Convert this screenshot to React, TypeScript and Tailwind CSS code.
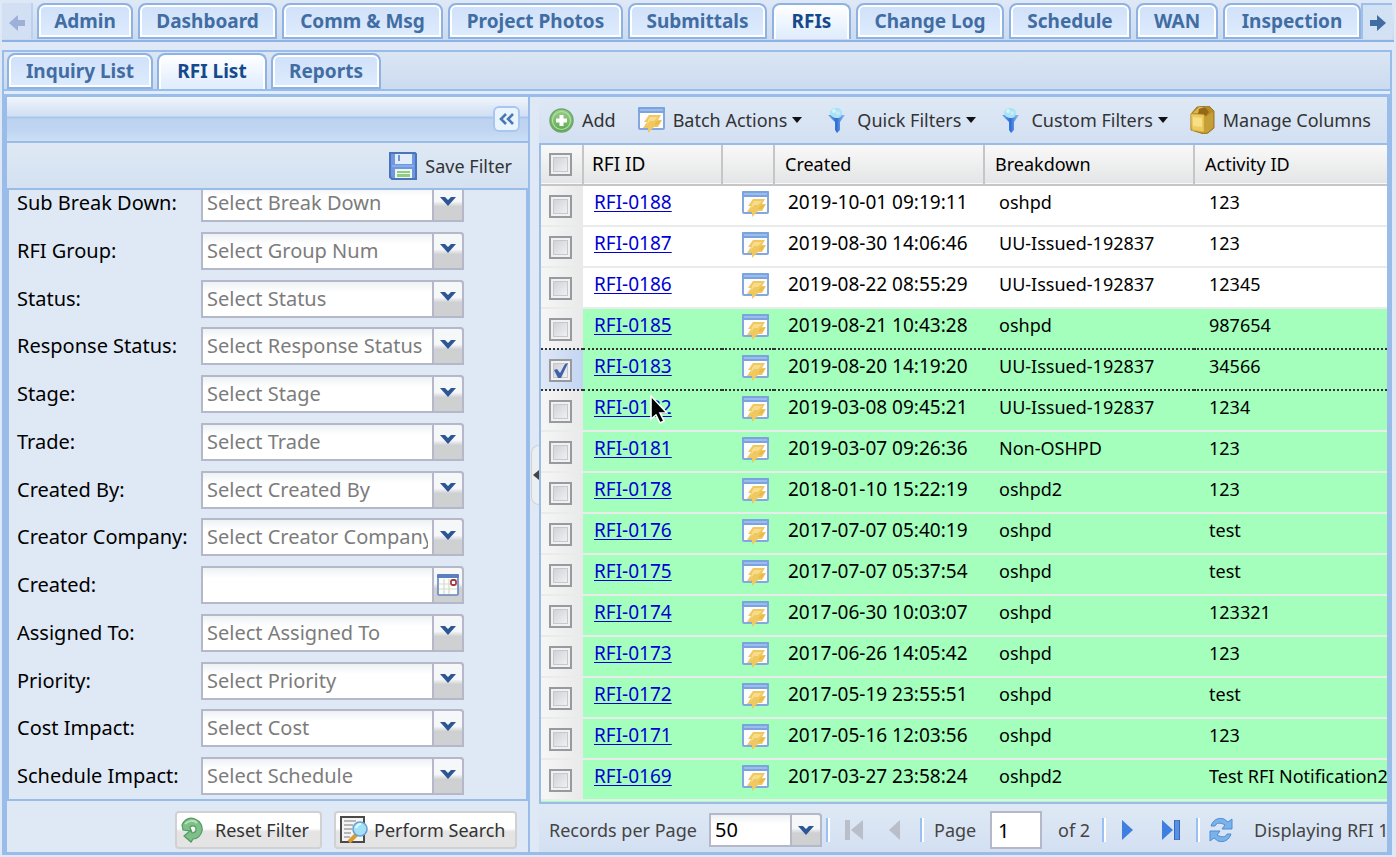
import React from "react";

type IconProps = { className?: string };

function ActionIcon({ className = "" }: IconProps) {
  return (
    <svg className={className} width="27" height="26" viewBox="0 0 27 26" aria-hidden="true">
      <rect x="1" y="1" width="25" height="21" rx="1" fill="#fdfdff" stroke="#84a8de" strokeWidth="2" />
      <rect x="0" y="0" width="27" height="6" rx="1" fill="#7ba4df" />
      <rect x="2" y="2" width="23" height="2" fill="#9bbcec" />
      <path d="M11 8h12l-3 5h4l-4 7h-4l-6 6 0-5H5l4-6H6z" fill="#f0c860" />
      <path d="M12 10h8l-4 4h-4l-3 4 1-5z" fill="#f9dc8a" />
      <path d="M19 14h4l-3 4h-4z" fill="#e9bb4a" />
    </svg>
  );
}

function AddIcon() {
  return (
    <svg width="25" height="25" viewBox="0 0 25 25" aria-hidden="true">
      <defs>
        <linearGradient id="add" x1="0" y1="0" x2="0" y2="1">
          <stop offset="0" stopColor="#9bd08c" />
          <stop offset="1" stopColor="#5aa84f" />
        </linearGradient>
      </defs>
      <circle cx="12.5" cy="12.5" r="11.5" fill="url(#add)" stroke="#6fa86c" strokeWidth="1.5" />
      <circle cx="12.5" cy="12.5" r="9" fill="none" stroke="#b5dfa9" strokeWidth="1.2" />
      <path d="M10.5 7h4v3.500H18v4h-3.500V18h-4v-3.500H7v-4h3.500z" fill="#fff" />
    </svg>
  );
}

function FunnelIcon() {
  return (
    <svg width="25" height="26" viewBox="-4 0 25 26" aria-hidden="true">
      <defs>
        <linearGradient id="funnel" x1="0" y1="0" x2="1" y2="0">
          <stop offset="0" stopColor="#6fabf0" />
          <stop offset="0.5" stopColor="#2f6fd4" />
          <stop offset="1" stopColor="#9cc3f3" />
        </linearGradient>
      </defs>
      <path d="M0 8h17l-5 7v8l-3 3-2-3v-8z" fill="url(#funnel)" />
      <path d="M2 6c0-3 3-5 6-5 4 0 6 2 6 5s-2 5-5 5-7-2-7-5z" fill="#a9e3f5" />
      <circle cx="6" cy="4" r="2" fill="#d2f4fb" />
      <circle cx="10" cy="6" r="2" fill="#c3edf8" />
    </svg>
  );
}

function BoxIcon() {
  return (
    <svg width="25" height="28" viewBox="0 0 25 28" aria-hidden="true">
      <path d="M1 8 7 1l12-1 5 5v17l-6 5-4 1-13-4z" fill="#b98d25" stroke="#9a7a26" strokeWidth="1" />
      <path d="M3 7l6-6 7 0-5 6z" fill="#dcb64c" />
      <path d="M9 3l6-2 4 5-3 4-8-2z" fill="#94691a" />
      <path d="M1 8l13 1v17L2 24z" fill="#edca5c" stroke="#d9b347" strokeWidth="1" />
      <path d="M3 11l9 1v9l-9-1z" fill="#f7df85" />
      <path d="M15 11l8-5v15l-5 5-3 1z" fill="#c59f38" />
    </svg>
  );
}

function SaveIcon() {
  return (
    <svg width="28" height="28" viewBox="0 0 28 28" aria-hidden="true">
      <path d="M1 1h25l1 1v25H3l-2-2z" fill="#6f98e0" stroke="#4b74ba" strokeWidth="2" />
      <rect x="6" y="2" width="17" height="10" fill="#e4edfa" />
      <rect x="9" y="3" width="2" height="6" fill="#6f95d6" />
      <rect x="3" y="13" width="22" height="2" fill="#85aaf0" />
      <rect x="6" y="17" width="17" height="9" fill="#eef6ee" />
      <rect x="8" y="19" width="13" height="2" fill="#8fcc86" />
      <rect x="8" y="22" width="13" height="3" fill="#8fcc86" />
    </svg>
  );
}

function ResetIcon() {
  return (
    <svg width="22" height="26" viewBox="0 0 22 26" aria-hidden="true">
      <path
        d="M1 8C4 2 9 0 14 2c5 2 8 7 7 12-1 5-5 8-9 8l-2 3-7-6 7-6 1 3c3 0 4-2 4-4 0-3-3-4-6-2l1 4-8-1z"
        fill="#7fc08a"
        stroke="#4f9a60"
        strokeWidth="1.2"
      />
      <path d="M4 7c4-4 9-4 12-1" fill="none" stroke="#b9e0bb" strokeWidth="2" />
    </svg>
  );
}

function SearchDocIcon() {
  return (
    <svg width="28" height="27" viewBox="0 0 28 27" aria-hidden="true">
      <rect x="1" y="1" width="23" height="25" fill="#f4f4f4" stroke="#4a4a4a" strokeWidth="2" />
      <path d="M4 5h12M4 9h9M4 13h8M4 17h7M4 21h6" stroke="#a2a2a2" strokeWidth="1.6" />
      <path d="M9 26l8-8" stroke="#d99a2e" strokeWidth="4" />
      <circle cx="20" cy="13" r="7" fill="#a5e1f6" stroke="#6a9fd2" strokeWidth="1.6" />
      <path d="M16 12c1-3 3-4 5-4" fill="none" stroke="#e6fafe" strokeWidth="2" />
    </svg>
  );
}

function CalendarIcon() {
  return (
    <svg width="22" height="22" viewBox="0 0 22 22" aria-hidden="true">
      <rect x="1" y="1" width="20" height="20" rx="1" fill="#fdfdfd" stroke="#6485bd" strokeWidth="1.6" />
      <rect x="0" y="0" width="22" height="4" rx="1" fill="#5a7fc0" />
      <path d="M2 10h18M2 15h18M7 5v15M12 5v15" stroke="#d3dccb" strokeWidth="1.2" />
      <rect x="14" y="6" width="5" height="5" rx="1.5" fill="#fff" stroke="#a33c3c" strokeWidth="1.8" />
    </svg>
  );
}

function RefreshIcon() {
  return (
    <svg width="26" height="26" viewBox="0 0 26 26" aria-hidden="true">
      <path d="M3 9C5 3 10 0 16 2l4 3 4-3v10H14l3-4C12 5 8 6 7 9z" fill="#7ab2ea" stroke="#4f8cd4" strokeWidth="1" />
      <path d="M23 17c-2 6-7 9-13 7l-4-3-4 3V14h10l-3 4c5 3 9 2 10-1z" fill="#7ab2ea" stroke="#4f8cd4" strokeWidth="1" />
    </svg>
  );
}

function Chevron() {
  return (
    <svg width="16" height="9" viewBox="0 0 16 9" aria-hidden="true">
      <path d="M0 0h5l3 3 3-3h5L8 9z" fill="#2d5696" />
    </svg>
  );
}

function Caret() {
  return (
    <svg width="11" height="6" viewBox="0 0 11 6" aria-hidden="true">
      <path d="M1 0h10L6 6z" fill="#111" />
    </svg>
  );
}

function ScrollArrow({ className = "", color }: { className?: string; color: string }) {
  return (
    <svg className={className} width="16" height="16" viewBox="0 0 16 16" aria-hidden="true">
      <path d="M0 5h7V0l9 8-9 8v-5H0z" fill={color} />
    </svg>
  );
}

const mainTabs = [
  { label: "Admin", width: "w-[96px]" },
  { label: "Dashboard", width: "w-[139px]" },
  { label: "Comm & Msg", width: "w-[161px]" },
  { label: "Project Photos", width: "w-[175px]" },
  { label: "Submittals", width: "w-[139px]" },
  { label: "RFIs", width: "w-[79px]", active: true },
  { label: "Change Log", width: "w-[148px]" },
  { label: "Schedule", width: "w-[122px]" },
  { label: "WAN", width: "w-[82px]" },
  { label: "Inspection", width: "w-[138px]" },
];

const subTabs = [
  { label: "Inquiry List", width: "w-[146px]" },
  { label: "RFI List", width: "w-[110px]", active: true },
  { label: "Reports", width: "w-[110px]" },
];

function Tab({ label, width, active }: { label: string; width: string; active?: boolean }) {
  const look = active
    ? "border-b-0 bg-linear-to-b from-white to-[#deecfd] pb-0.5 text-[#15498b] shadow-[inset_2px_2px_0_#fff,inset_-2px_0_0_#fff]"
    : "bg-linear-to-b from-[#cfe0f9] to-[#deecfd] text-[#416da3] shadow-[inset_0_0_0_2px_#fff]";
  return (
    <button
      type="button"
      role="tab"
      aria-selected={!!active}
      className={`h-9 shrink-0 rounded-t-lg border-2 border-[#8db2e3] text-center font-bold leading-6 whitespace-nowrap ${width} ${look}`}
    >
      {label}
    </button>
  );
}

const filters = [
  { id: "sub", label: "Sub Break Down:", hint: "Select Break Down" },
  { id: "group", label: "RFI Group:", hint: "Select Group Num" },
  { id: "status", label: "Status:", hint: "Select Status" },
  { id: "response", label: "Response Status:", hint: "Select Response Status" },
  { id: "stage", label: "Stage:", hint: "Select Stage" },
  { id: "trade", label: "Trade:", hint: "Select Trade" },
  { id: "creator", label: "Created By:", hint: "Select Created By" },
  { id: "company", label: "Creator Company:", hint: "Select Creator Company" },
  { id: "created", label: "Created:", date: true },
  { id: "assigned", label: "Assigned To:", hint: "Select Assigned To" },
  { id: "priority", label: "Priority:", hint: "Select Priority" },
  { id: "cost", label: "Cost Impact:", hint: "Select Cost" },
  { id: "schedule", label: "Schedule Impact:", hint: "Select Schedule" },
];

const triggerLook =
  "flex w-8 items-center justify-center rounded-tr border-2 border-[#b5b8c8] bg-linear-to-b from-[#f6f7f9] from-45% to-[#cfd0d1] to-60%";

function FilterRow({ id, label, hint, date }: { id: string; label: string; hint?: string; date?: boolean }) {
  return (
    <div className="flex h-[38px] shrink-0 items-center text-[20px] first:-mt-1.5">
      <label htmlFor={id} className="w-[192px] pl-2 whitespace-nowrap text-black">
        {label}
      </label>
      {date ? (
        <div className="flex h-full w-[263px]">
          <input
            id={id}
            type="text"
            className="h-full min-w-0 flex-1 border-2 border-r-0 border-[#b5b8c8] bg-linear-to-b from-[#eef1f3] to-white to-30% px-1 outline-none"
          />
          <button type="button" aria-label="Pick date" className={triggerLook}>
            <CalendarIcon />
          </button>
        </div>
      ) : (
        <div className="relative h-full w-[263px]">
          <select
            id={id}
            className="h-full w-full appearance-none rounded-tr border-2 border-[#b5b8c8] bg-linear-to-b from-[#eef1f3] to-white to-30% pr-[34px] pl-1 text-[#7c7c7c] outline-none"
          >
            <option>{hint}</option>
          </select>
          <span className={`pointer-events-none absolute inset-y-0 right-0 pb-1 ${triggerLook}`}>
            <Chevron />
          </span>
        </div>
      )}
    </div>
  );
}

const rows = [
  ["RFI-0188", "2019-10-01 09:19:11", "oshpd", "123"],
  ["RFI-0187", "2019-08-30 14:06:46", "UU-Issued-192837", "123"],
  ["RFI-0186", "2019-08-22 08:55:29", "UU-Issued-192837", "12345"],
  ["RFI-0185", "2019-08-21 10:43:28", "oshpd", "987654"],
  ["RFI-0183", "2019-08-20 14:19:20", "UU-Issued-192837", "34566"],
  ["RFI-0182", "2019-03-08 09:45:21", "UU-Issued-192837", "1234"],
  ["RFI-0181", "2019-03-07 09:26:36", "Non-OSHPD", "123"],
  ["RFI-0178", "2018-01-10 15:22:19", "oshpd2", "123"],
  ["RFI-0176", "2017-07-07 05:40:19", "oshpd", "test"],
  ["RFI-0175", "2017-07-07 05:37:54", "oshpd", "test"],
  ["RFI-0174", "2017-06-30 10:03:07", "oshpd", "123321"],
  ["RFI-0173", "2017-06-26 14:05:42", "oshpd", "123"],
  ["RFI-0172", "2017-05-19 23:55:51", "oshpd", "test"],
  ["RFI-0171", "2017-05-16 12:03:56", "oshpd", "123"],
  ["RFI-0169", "2017-03-27 23:58:24", "oshpd2", "Test RFI Notification2"],
];

function Check({ label, checked }: { label: string; checked?: boolean }) {
  return (
    <span className="relative block size-[23px]">
      <input
        type="checkbox"
        aria-label={label}
        defaultChecked={checked}
        className="peer block size-full appearance-none border-2 border-[#979b9f] bg-linear-to-br from-[#c9ccd3] to-[#f7f7f7] shadow-[inset_0_0_0_2px_#f1f1f1,inset_0_0_0_3px_#c6c8cc]"
      />
      <svg
        className="pointer-events-none absolute inset-0 hidden peer-checked:block"
        width="23"
        height="23"
        viewBox="0 0 23 23"
        aria-hidden="true"
      >
        <path d="M5 11l3-1 3 4 5-9 3-1-7 15h-3z" fill="#3f62ab" />
      </svg>
    </span>
  );
}

function ToolButton({ icon, label, menu }: { icon: React.ReactNode; label: string; menu?: boolean }) {
  return (
    <button type="button" className="flex shrink-0 items-center whitespace-nowrap">
      {icon}
      <span className="pl-2">{label}</span>
      {menu && (
        <span className="pl-1">
          <Caret />
        </span>
      )}
    </button>
  );
}

function Separator() {
  return <span className="h-6 w-1 shrink-0 border-r-2 border-l-2 border-r-white border-l-[#98c0f4]" />;
}

function Grid() {
  return (
    <div className="min-h-0 flex-1 overflow-hidden border-y-2 border-l-2 border-[#99bce8] bg-[#a4ffbc]">
      <table className="w-full table-fixed border-collapse text-left text-[19px] text-black">
        <colgroup>
          <col className="w-[42px]" />
          <col className="w-[139px]" />
          <col className="w-[52px]" />
          <col className="w-[210px]" />
          <col className="w-[210px]" />
          <col />
        </colgroup>
        <thead>
          <tr className="h-10 border-b-2 border-[#c5c5ca] bg-linear-to-b from-[#f9f9f9] to-[#e4e5e6]">
            <th className="border-r-2 border-[#c5c5ca] pl-2">
              <Check label="Select all" />
            </th>
            <th className="border-r-2 border-[#c5c5ca] pb-0.5 pl-2 font-normal">RFI ID</th>
            <th className="border-r-2 border-[#c5c5ca]" aria-label="Actions" />
            <th className="border-r-2 border-[#c5c5ca] pb-0.5 pl-2.5 text-[18px] font-normal">Created</th>
            <th className="border-r-2 border-[#c5c5ca] pb-0.5 pl-2.5 text-[18px] font-normal">Breakdown</th>
            <th className="pb-0.5 pl-2.5 text-[18px] font-normal">Activity ID</th>
          </tr>
        </thead>
        <tbody>
          {rows.map(([id, created, breakdown, activity], i) => {
            const line =
              i === 3 || i === 4 ? "border-b-2 border-dotted border-[#333]" : "border-b-2 border-[#e9eceb]";
            const fill = i < 3 ? "bg-white" : "bg-[#a4ffbc]";
            const checkFill = i === 4 ? "bg-linear-to-r from-[#dfe8f6] to-[#c3d5f2]" : "bg-linear-to-r from-[#f6f6f6] to-[#e9e9ea]";
            return (
              <tr key={id} className={`h-[41px] ${line} ${fill}`}>
                <td className={`pt-0.5 pl-2 ${checkFill}`}>
                  <Check label={`Select ${id}`} checked={i === 4} />
                </td>
                <td className="pb-2 pl-[11px]">
                  <span className="relative block">
                    <a href="#" className="text-[#0000d4] underline underline-offset-2">
                      {id}
                    </a>
                    {id === "RFI-0182" && (
                      <svg
                        className="pointer-events-none absolute top-0 left-14"
                        width="18"
                        height="30"
                        viewBox="0 0 18 30"
                        aria-hidden="true"
                      >
                        <path d="M1 1v23l5-4 4 8 4-2-4-8h7z" fill="#000" stroke="#fff" strokeWidth="1.6" />
                      </svg>
                    )}
                  </span>
                </td>
                <td className="pb-1 pl-5">
                  <ActionIcon />
                </td>
                <td className="pb-2 pl-3.5 whitespace-nowrap">{created}</td>
                <td className="pb-2 pl-[15px] text-[18px] whitespace-nowrap">{breakdown}</td>
                <td className="pb-2 pl-[15px] text-[18px] whitespace-nowrap">{activity}</td>
              </tr>
            );
          })}
        </tbody>
      </table>
    </div>
  );
}

function Pager() {
  return (
    <div className="flex h-12 shrink-0 items-center overflow-hidden bg-linear-to-b from-[#dfe9f5] to-[#d3e0f2] pt-1 pl-2.5 whitespace-nowrap text-[#444]">
      <label htmlFor="page-size" className="w-[160px] shrink-0">
        Records per Page
      </label>
      <div className="relative h-[34px] w-[113px] shrink-0">
        <select
          id="page-size"
          className="h-full w-full appearance-none rounded-tr border-2 border-[#b5b8c8] bg-linear-to-b from-[#eef1f3] to-white to-30% pl-1 text-[20px] text-black outline-none"
        >
          <option>50</option>
        </select>
        <span className={`pointer-events-none absolute inset-y-0 right-0 ${triggerLook}`}>
          <Chevron />
        </span>
      </div>
      <div className="flex items-center pl-1">
        <Separator />
        <button type="button" aria-label="First page" className="ml-2 flex w-8 justify-center">
          <svg width="18" height="20" viewBox="0 0 18 20" aria-hidden="true">
            <path d="M0 0h5v20H0zM18 0v20L6 10z" fill="#b9bec8" />
          </svg>
        </button>
        <button type="button" aria-label="Previous page" className="ml-2 flex w-8 justify-center">
          <svg width="11" height="20" viewBox="0 0 11 20" aria-hidden="true">
            <path d="M11 0v20L0 10z" fill="#b9bec8" />
          </svg>
        </button>
        <span className="w-2.5" />
        <Separator />
      </div>
      <label htmlFor="page" className="w-[66px] shrink-0 pl-2.5">
        Page
      </label>
      <input
        id="page"
        type="text"
        defaultValue="1"
        className="h-[38px] w-[52px] shrink-0 border-2 border-[#b5b8c8] bg-white pl-1.5 text-[20px] text-black outline-none"
      />
      <span className="w-[60px] shrink-0 pl-4">of 2</span>
      <Separator />
      <button type="button" aria-label="Next page" className="ml-4 w-5 shrink-0">
        <svg width="11" height="20" viewBox="0 0 11 20" aria-hidden="true">
          <path d="M0 0v20l11-10z" fill="#3f7fe0" />
        </svg>
      </button>
      <button type="button" aria-label="Last page" className="ml-5 w-5 shrink-0">
        <svg width="18" height="20" viewBox="0 0 18 20" aria-hidden="true">
          <path d="M0 0v20l11-10z" fill="#3f7fe0" />
          <path d="M12.500 0h5v20h-5z" fill="#5b8fe2" stroke="#3568b8" />
        </svg>
      </button>
      <span className="w-3.5 shrink-0" />
      <Separator />
      <button type="button" aria-label="Refresh" className="ml-2 shrink-0">
        <RefreshIcon />
      </button>
      <span className="pl-5">Displaying RFI 1</span>
    </div>
  );
}

const softButton =
  "flex h-[38px] items-center rounded border-2 border-[#d1d1d1] bg-linear-to-b from-white from-45% to-[#e4e4e5] to-55% pl-1 whitespace-nowrap";

export default function App() {
  return (
    <div className="flex h-screen flex-col overflow-hidden bg-[#dfe8f6] px-0.5 pb-0.5 font-['Noto_Sans',sans-serif] text-[18px] leading-6 text-[#333]">
      <div
        role="tablist"
        className="flex h-[42px] shrink-0 items-start overflow-hidden border-b-2 border-[#8db2e3] bg-linear-to-b from-[#dfe8f6] to-[#cbdbef] pt-[3px] text-[19px]"
      >
        <button
          type="button"
          aria-label="Scroll tabs left"
          className="flex h-9 w-[31px] shrink-0 items-center justify-center border-r-2 border-[#bcd0ef] bg-[#d3dff3] pt-1"
        >
          <ScrollArrow className="rotate-180" color="#9db1d8" />
        </button>
        <div className="flex gap-[5px] pl-1">
          {mainTabs.map((t) => (
            <Tab key={t.label} {...t} />
          ))}
        </div>
        <button
          type="button"
          aria-label="Scroll tabs right"
          className="mr-0.5 flex h-9 min-w-[30px] flex-1 items-center justify-center border-t-2 border-l-2 border-[#9dbfea] bg-[#d3e1f5] pt-0.5"
        >
          <ScrollArrow color="#416da3" />
        </button>
      </div>

      <div className="mt-2 mr-0.5 flex min-h-0 flex-1 flex-col border-2 border-b-[3px] border-[#99bce8]">
        <div
          role="tablist"
          className="flex h-[39px] shrink-0 items-end gap-1 border-b-2 border-[#99bce8] bg-linear-to-b from-[#dbe6f4] to-[#cbdbef] pl-[3px] text-[19px]"
        >
          {subTabs.map((t) => (
            <Tab key={t.label} {...t} />
          ))}
        </div>
        <div className="h-[3px] shrink-0 bg-[#deecfd]" />

        <div className="flex min-h-0 flex-1 border-x-[3px] border-t-[3px] border-[#99bce8] bg-[#dfe9f5]">
          <aside className="flex w-[523px] shrink-0 flex-col border-r-2 border-[#99bce8]">
            <div className="flex h-[46px] shrink-0 items-center justify-end border-b-2 border-[#99bce8] bg-[linear-gradient(to_bottom,#f0f5fb_0px,#d0dff3_19px,#aac7ed_20px,#aac7ed_21px,#bcd2f0_22px,#bfd5f1_33px,#cbdff5_44px)] pr-2">
              <button
                type="button"
                aria-label="Collapse filters"
                className="flex h-[26px] w-[27px] items-center justify-center rounded-md border-2 border-[#a9c6ee] bg-[#eaf4fd]"
              >
                <svg width="16" height="14" viewBox="0 0 16 14" aria-hidden="true">
                  <path d="M7 2L2 7l5 5M14 2L9 7l5 5" fill="none" stroke="#4a78b5" strokeWidth="2.6" />
                </svg>
              </button>
            </div>
            <div className="flex h-[47px] shrink-0 items-center justify-end border-b-2 border-[#99bce8] bg-linear-to-b from-[#dfe9f5] to-[#d3e1f1] pr-4">
              <ToolButton icon={<SaveIcon />} label="Save Filter" />
            </div>
            <form className="flex min-h-0 flex-1 flex-col justify-between overflow-hidden border-r-2 border-l-2 border-[#99bce8] pb-1">
              {filters.map((f) => (
                <FilterRow key={f.id} {...f} />
              ))}
            </form>
            <div className="flex h-[53px] shrink-0 items-center justify-end gap-3 border-t-2 border-[#99bce8] pt-1.5 pr-[11px]">
              <button type="button" className={`${softButton} w-[147px] gap-3`}>
                <ResetIcon />
                Reset Filter
              </button>
              <button type="button" className={`${softButton} w-[183px] gap-1.5`}>
                <SearchDocIcon />
                Perform Search
              </button>
            </div>
          </aside>

          <div className="flex w-[9px] shrink-0 items-center justify-end">
            <button
              type="button"
              aria-label="Toggle filter panel"
              className="flex h-[60px] w-2 items-center justify-center rounded-l-lg border border-r-0 border-[#cfd3d8] bg-[#eceff2]"
            >
              <svg width="6" height="10" viewBox="0 0 6 10" aria-hidden="true">
                <path d="M6 0v10L0 5z" fill="#444" />
              </svg>
            </button>
          </div>

          <main className="flex min-w-0 flex-1 flex-col">
            <div className="flex h-[46px] shrink-0 items-center gap-[22px] bg-linear-to-b from-[#dfe9f5] to-[#d3e0f2] pl-2.5">
              <ToolButton icon={<AddIcon />} label="Add" />
              <ToolButton icon={<ActionIcon />} label="Batch Actions" menu />
              <ToolButton icon={<FunnelIcon />} label="Quick Filters" menu />
              <ToolButton icon={<FunnelIcon />} label="Custom Filters" menu />
              <ToolButton icon={<BoxIcon />} label="Manage Columns" />
            </div>
            <Grid />
            <Pager />
          </main>
        </div>
      </div>
    </div>
  );
}
